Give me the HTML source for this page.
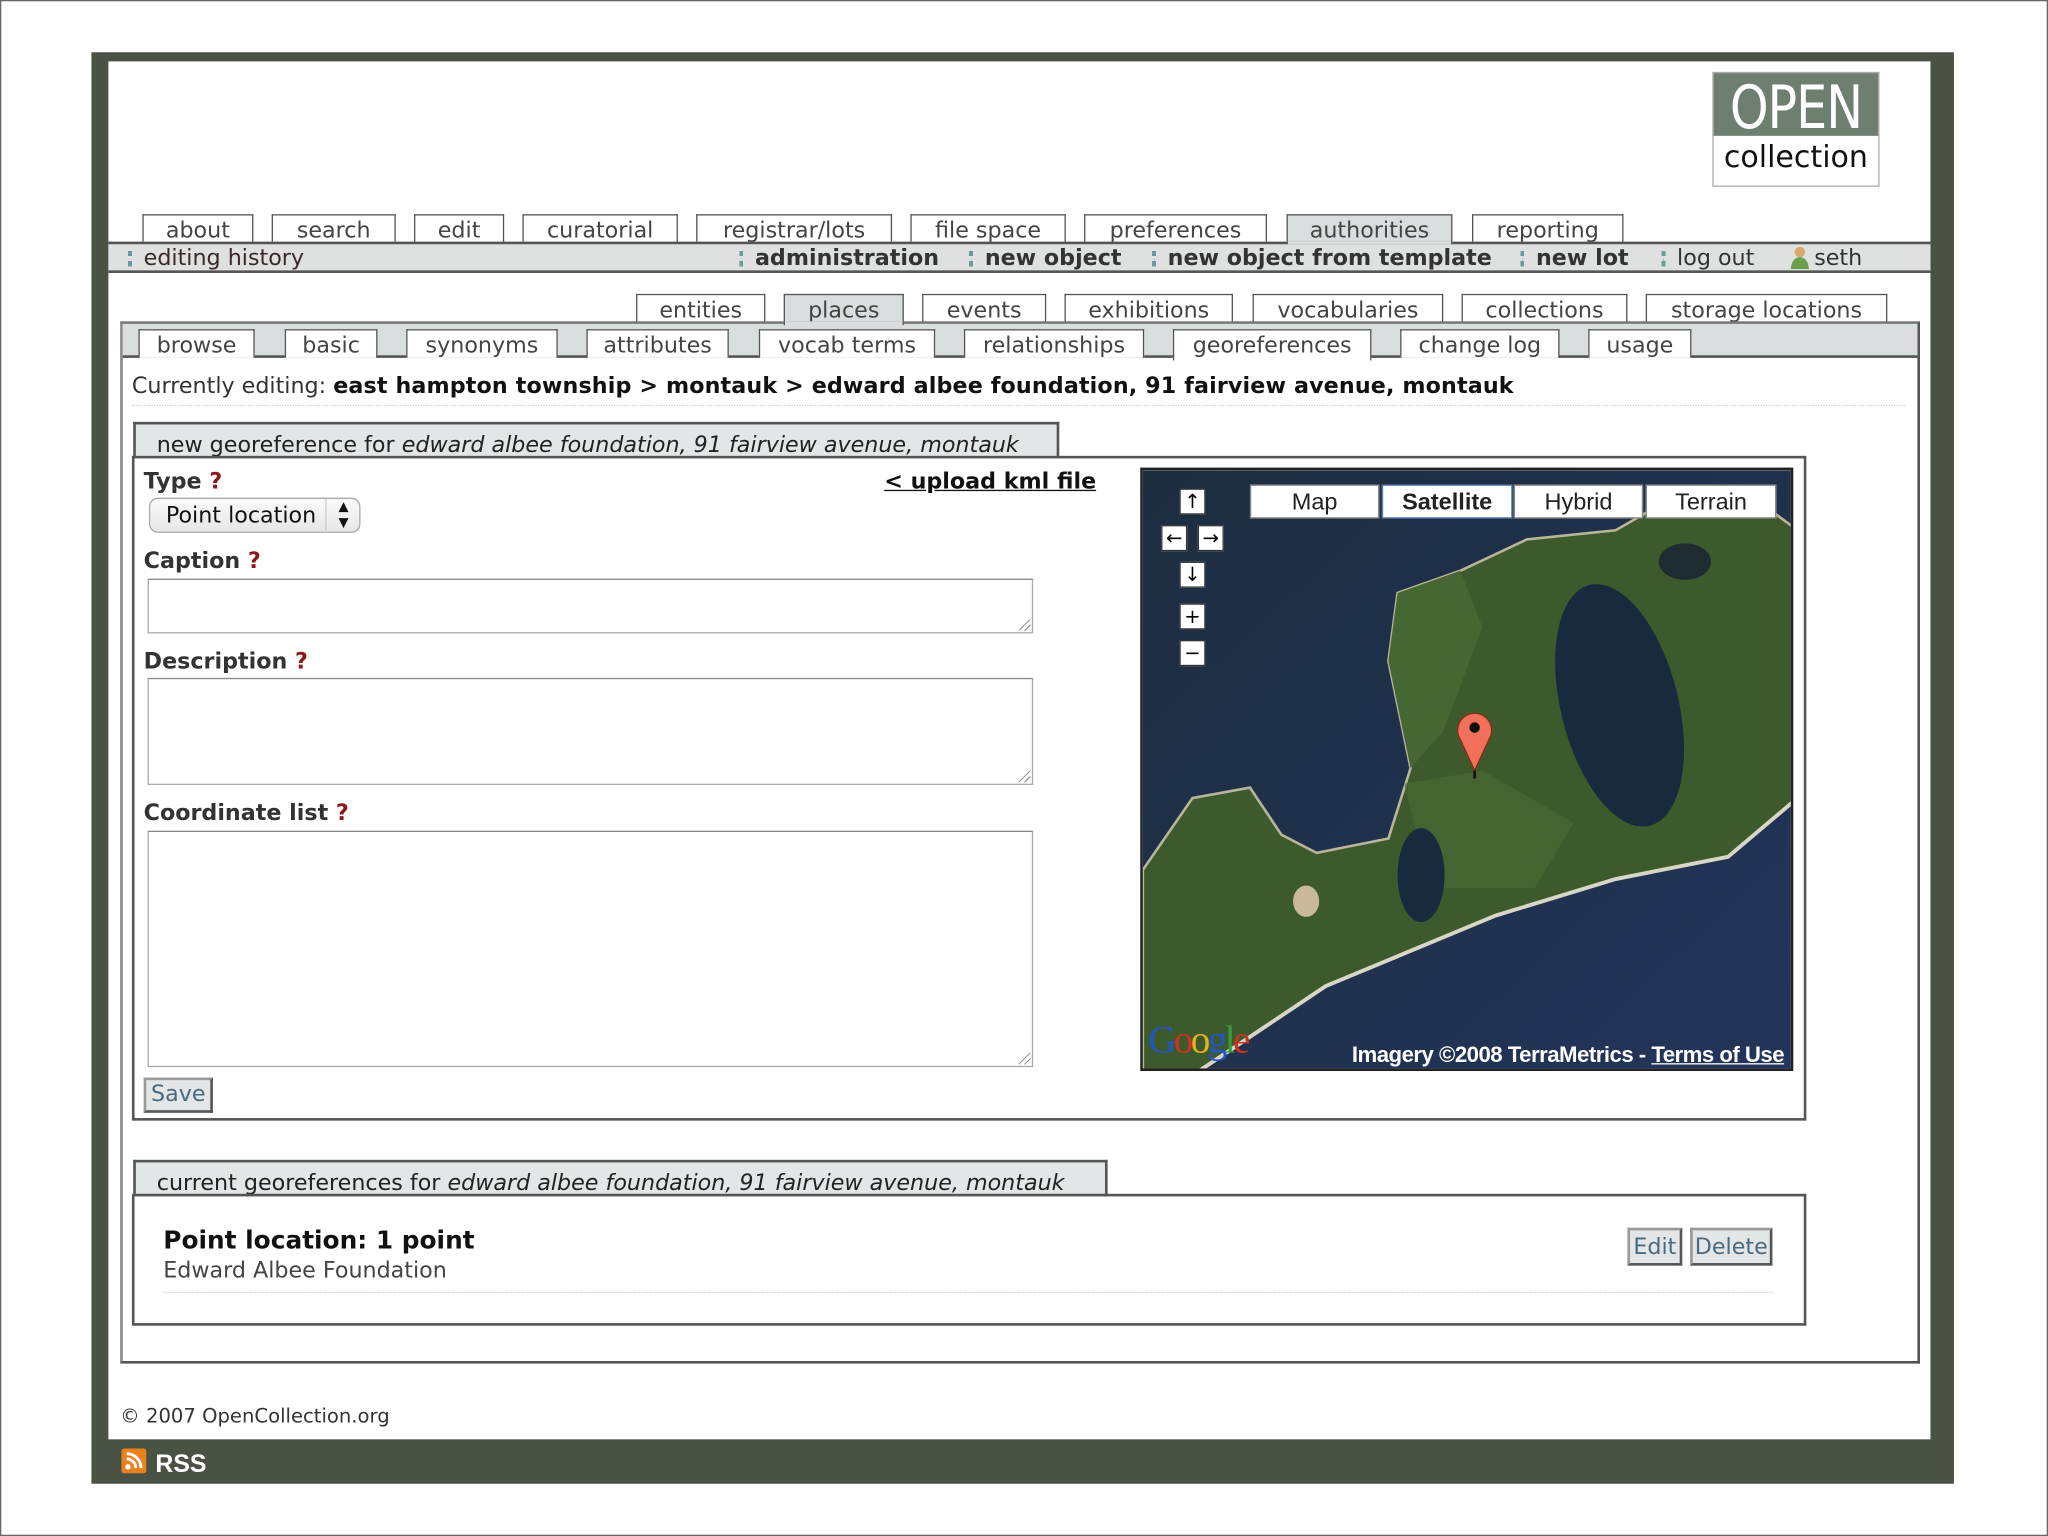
<!DOCTYPE html>
<html><head><meta charset="utf-8"><style>
html,body{margin:0;padding:0;background:#fff;width:2048px;height:1536px;overflow:hidden}
#w{position:absolute;left:0;top:0;width:1568px;height:1176px;transform:scale(1.306122);transform-origin:0 0;font-family:"DejaVu Sans","Liberation Sans",sans-serif;font-size:17px;color:#333}
.a{position:absolute}
.t{position:absolute;border:1px solid #555;border-bottom:none;background:#fff;text-align:center;line-height:24px;color:#444;box-sizing:border-box;height:22px}
.t.on{background:#d9dddd}
.b{font-weight:bold;color:#333}
.dot{display:inline-block;width:3px;height:12px;border-left:3px dotted #6a9a9a;margin-right:6px;vertical-align:-1px}
.lbl{position:absolute;font-weight:bold;color:#333}
.lbl span{color:#8a1a1a}
.ta{position:absolute;border:1px solid #aaa;border-top-color:#888;background:#fff;box-sizing:border-box}
.ta:after{content:"";position:absolute;right:1px;bottom:1px;width:9px;height:9px;background:linear-gradient(135deg,transparent 45%,#999 46%,#999 52%,transparent 53%,transparent 70%,#999 71%,#999 77%,transparent 78%)}
.btn{position:absolute;border:2px solid #555;border-top-color:#999;border-left-color:#999;background:#e2e6e6;color:#4a6a80;text-align:center;box-sizing:border-box;line-height:22px}
.mb{position:absolute;top:371px;height:26px;background:#fff;border:1px solid #888;box-sizing:border-box;font-family:"Liberation Sans",sans-serif;font-size:18px;text-align:center;line-height:24px;color:#222}
.nav{position:absolute;width:20px;height:20px;background:#fff;border:1px solid #333;box-sizing:border-box;font-family:"DejaVu Sans",sans-serif;font-size:15px;line-height:18px;text-align:center;color:#000}
</style></head><body><div id="w">
<div class="a" style="left:0;top:0;width:1566px;height:1174px;border:1px solid #666"></div>
<div class="a" style="left:70px;top:40px;width:1426px;height:1096px;background:#4a5343"></div>
<div class="a" style="left:83px;top:47px;width:1395px;height:1055px;background:#fff"></div>
<!-- logo -->
<div class="a" style="left:1311px;top:55px;width:128px;height:88px;border:1px solid #aaa;box-sizing:border-box;background:#fff"></div>
<div class="a" style="left:1312px;top:56px;width:126px;height:48px;background:#6e7f70;overflow:hidden"><div style="color:#fff;font-family:'DejaVu Sans',sans-serif;font-size:46px;line-height:52px;width:126px;text-align:center;transform:scaleX(.82);letter-spacing:-1px">OPEN</div></div>
<div class="a" style="left:1312px;top:104px;width:126px;height:36px;color:#111;font-size:23px;line-height:34px;text-align:center">collection</div>
<!-- top tabs -->
<div class="t" style="left:109px;top:164px;width:85px">about</div>
<div class="t" style="left:208px;top:164px;width:95px">search</div>
<div class="t" style="left:317px;top:164px;width:69px">edit</div>
<div class="t" style="left:400px;top:164px;width:119px">curatorial</div>
<div class="t" style="left:533px;top:164px;width:150px">registrar/lots</div>
<div class="t" style="left:697px;top:164px;width:119px">file space</div>
<div class="t" style="left:830px;top:164px;width:140px">preferences</div>
<div class="t on" style="left:985px;top:164px;width:127px;height:24px">authorities</div>
<div class="t" style="left:1127px;top:164px;width:116px">reporting</div>
<div class="a" style="left:83px;top:185px;width:1395px;height:20px;border-top:2px solid #555;border-bottom:2px solid #555;background:#dfe1e1"></div>
<div class="a" style="left:985px;top:185px;width:127px;height:2px;background:#d9dddd;border-left:1px solid #555;border-right:1px solid #555;box-sizing:border-box"></div>
<div class="a" style="left:98px;top:187px;line-height:22px;color:#3a2a2a"><span class="dot"></span>editing history</div>
<div class="a b" style="left:566px;top:187px;line-height:22px"><span class="dot"></span>administration</div>
<div class="a b" style="left:742px;top:187px;line-height:22px"><span class="dot"></span>new object</div>
<div class="a b" style="left:882px;top:187px;line-height:22px"><span class="dot"></span>new object from template</div>
<div class="a b" style="left:1164px;top:187px;line-height:22px"><span class="dot"></span>new lot</div>
<div class="a" style="left:1272px;top:187px;line-height:22px"><span class="dot"></span>log out</div>
<div class="a" style="left:1370px;top:188px;width:16px;height:18px"><svg width="16" height="18"><circle cx="8" cy="5" r="4" fill="#d9a86a"/><path d="M1 18 Q2 9 8 9 Q14 9 15 18Z" fill="#6aa04a"/></svg></div>
<div class="a" style="left:1389px;top:187px;line-height:22px">seth</div>
<!-- second tabs -->
<div class="t" style="left:487px;top:225px;width:99px">entities</div>
<div class="t on" style="left:600px;top:225px;width:92px;height:24px">places</div>
<div class="t" style="left:706px;top:225px;width:95px">events</div>
<div class="t" style="left:815px;top:225px;width:129px">exhibitions</div>
<div class="t" style="left:959px;top:225px;width:146px">vocabularies</div>
<div class="t" style="left:1119px;top:225px;width:127px">collections</div>
<div class="t" style="left:1260px;top:225px;width:185px">storage locations</div>
<!-- content box -->
<div class="a" style="left:92px;top:246px;width:1378px;height:798px;border:2px solid #555;border-top-color:#777;border-left-color:#888;box-sizing:border-box"></div>
<div class="a" style="left:94px;top:248px;width:1374px;height:24px;background:#d9dddd;border-bottom:2px solid #555"></div>
<div class="a" style="left:600px;top:246px;width:92px;height:3px;background:#d9dddd;border-left:1px solid #555;border-right:1px solid #555;box-sizing:border-box"></div>
<div class="t" style="left:106px;top:252px;width:89px">browse</div>
<div class="t" style="left:218px;top:252px;width:71px">basic</div>
<div class="t" style="left:311px;top:252px;width:116px">synonyms</div>
<div class="t" style="left:449px;top:252px;width:109px">attributes</div>
<div class="t" style="left:581px;top:252px;width:135px">vocab terms</div>
<div class="t" style="left:738px;top:252px;width:138px">relationships</div>
<div class="t" style="left:898px;top:252px;width:152px;height:24px">georeferences</div>
<div class="t" style="left:1072px;top:252px;width:122px">change log</div>
<div class="t" style="left:1216px;top:252px;width:79px">usage</div>
<div class="a" style="left:101px;top:285px;line-height:22px">Currently editing: <b style="color:#111;letter-spacing:.1px">east hampton township &gt; montauk &gt; edward albee foundation, 91 fairview avenue, montauk</b></div>
<div class="a" style="left:101px;top:310px;width:1358px;border-top:1px dotted #ccc"></div>
<!-- box1 -->
<div class="a" style="left:102px;top:323px;width:709px;height:28px;border:2px solid #555;border-bottom:none;background:#e3e6e6;box-sizing:border-box;padding-left:16px;line-height:32px;color:#222">new georeference for <i>edward albee foundation, 91 fairview avenue, montauk</i></div>
<div class="a" style="left:101px;top:349px;width:1282px;height:509px;border:2px solid #555;box-sizing:border-box"></div>
<div class="lbl" style="left:110px;top:359px">Type <span>?</span></div>
<div class="a" style="left:677px;top:359px;font-weight:bold;color:#111;text-decoration:underline">&lt; upload kml file</div>
<div class="a" style="left:114px;top:381px;width:162px;height:27px;border:1px solid #aaa;border-radius:7px;background:linear-gradient(#fafafa,#e6e6e6);box-sizing:border-box;line-height:26px;padding-left:12px;color:#111">Point location<span style="position:absolute;left:134px;top:0;height:25px;border-left:1px solid #ccc;width:26px;text-align:center;font-size:10px;line-height:12px;padding-top:1px">▲<br>▼</span></div>
<div class="lbl" style="left:110px;top:420px">Caption <span>?</span></div>
<div class="ta" style="left:113px;top:443px;width:678px;height:42px"></div>
<div class="lbl" style="left:110px;top:497px">Description <span>?</span></div>
<div class="ta" style="left:113px;top:519px;width:678px;height:82px"></div>
<div class="lbl" style="left:110px;top:613px">Coordinate list <span>?</span></div>
<div class="ta" style="left:113px;top:636px;width:678px;height:181px"></div>
<div class="btn" style="left:110px;top:825px;width:53px;height:27px;font-size:17px">Save</div>
<!-- map -->
<div class="a" style="left:873px;top:358px;width:500px;height:462px;border:2px solid #222;box-sizing:border-box;overflow:hidden">
<svg width="500" height="462" viewBox="0 0 500 462" style="display:block">
<defs><linearGradient id="o" x1="0" y1="0" x2="1" y2="1"><stop offset="0" stop-color="#1d2d40"/><stop offset="1" stop-color="#22355a"/></linearGradient></defs>
<rect width="500" height="462" fill="url(#o)"/>
<path d="M0 306 L38 251 L82 243 L106 279 L133 293 L188 282 L205 228 L188 146 L195 94 L243 77 L294 53 L362 46 L414 16 L455 12 L500 45 L500 252 L448 296 L362 313 L270 341 L140 395 L40 462 L0 462Z" fill="#3d5a2c" stroke="#b9b59a" stroke-width="2"/>
<path d="M188 146 L195 94 L243 77 L260 120 L230 200 L205 228Z" fill="#466634"/>
<path d="M200 240 L260 230 L330 270 L300 320 L220 320Z" fill="#4a6a36" opacity=".6"/>
<ellipse cx="365" cy="180" rx="45" ry="95" transform="rotate(-14 365 180)" fill="#1a2a3e"/>
<ellipse cx="213" cy="310" rx="18" ry="36" fill="#1a2a3e"/>
<ellipse cx="415" cy="70" rx="20" ry="14" fill="#1e2b30"/>
<path d="M40 462 L140 395 L270 341 L362 313 L448 296 L500 252" fill="none" stroke="#d8d6c4" stroke-width="3"/>
<ellipse cx="125" cy="330" rx="10" ry="12" fill="#c9b89a"/>
<path d="M254 230 L243 206 A13 13 0 1 1 265 206 Z" fill="#f0705a" stroke="#8a2a1a" stroke-width="1"/>
<circle cx="254" cy="197" r="4" fill="#111"/>
<line x1="254" y1="230" x2="254" y2="236" stroke="#111" stroke-width="2"/>
</svg>
<div class="a" style="left:4px;top:420px;font-family:'Liberation Serif',serif;font-size:30px;letter-spacing:-2px"><span style="color:#2255cc">G</span><span style="color:#cc3322">o</span><span style="color:#e8b020">o</span><span style="color:#2255cc">g</span><span style="color:#3a9a3a">l</span><span style="color:#cc3322">e</span></div>
<div class="a" style="left:160px;top:438px;color:#fff;font-family:'Liberation Sans',sans-serif;font-size:17px;font-weight:bold;letter-spacing:-.4px;white-space:nowrap">Imagery ©2008 TerraMetrics - <u>Terms of Use</u></div>
</div>
<div class="mb" style="left:957px;width:99px">Map</div>
<div class="mb" style="left:1058px;width:100px;font-weight:bold;border-color:#5a7ab0">Satellite</div>
<div class="mb" style="left:1159px;width:99px">Hybrid</div>
<div class="mb" style="left:1260px;width:100px">Terrain</div>
<div class="nav" style="left:903px;top:374px">↑</div>
<div class="nav" style="left:889px;top:402px">←</div>
<div class="nav" style="left:917px;top:402px">→</div>
<div class="nav" style="left:903px;top:430px">↓</div>
<div class="nav" style="left:903px;top:462px">+</div>
<div class="nav" style="left:903px;top:490px">−</div>
<!-- box2 -->
<div class="a" style="left:102px;top:888px;width:746px;height:28px;border:2px solid #555;border-bottom:none;background:#e3e6e6;box-sizing:border-box;padding-left:16px;line-height:32px;color:#222">current georeferences for <i>edward albee foundation, 91 fairview avenue, montauk</i></div>
<div class="a" style="left:101px;top:914px;width:1282px;height:101px;border:2px solid #555;box-sizing:border-box"></div>
<div class="a" style="left:125px;top:939px;font-weight:bold;font-size:19px;color:#111">Point location: 1 point</div>
<div class="a" style="left:125px;top:963px;color:#444">Edward Albee Foundation</div>
<div class="a" style="left:125px;top:989px;width:1233px;border-top:1px dotted #ccc"></div>
<div class="btn" style="left:1246px;top:940px;width:42px;height:29px;line-height:27px">Edit</div>
<div class="btn" style="left:1294px;top:940px;width:63px;height:29px;line-height:27px">Delete</div>
<!-- footer -->
<div class="a" style="left:92px;top:1075px;font-size:15px;color:#333">© 2007 OpenCollection.org</div>
<div class="a" style="left:93px;top:1109px;width:19px;height:19px;background:#e8821e;border-radius:2px"><svg width="19" height="19"><circle cx="5" cy="14" r="2" fill="#fff"/><path d="M4 8 A7 7 0 0 1 11 15 M4 4 A11 11 0 0 1 15 15" stroke="#fff" stroke-width="2.2" fill="none"/></svg></div>
<div class="a" style="left:119px;top:1111px;color:#fff;font-weight:bold;font-family:'Liberation Sans',sans-serif;font-size:19px">RSS</div>
</div></body></html>
